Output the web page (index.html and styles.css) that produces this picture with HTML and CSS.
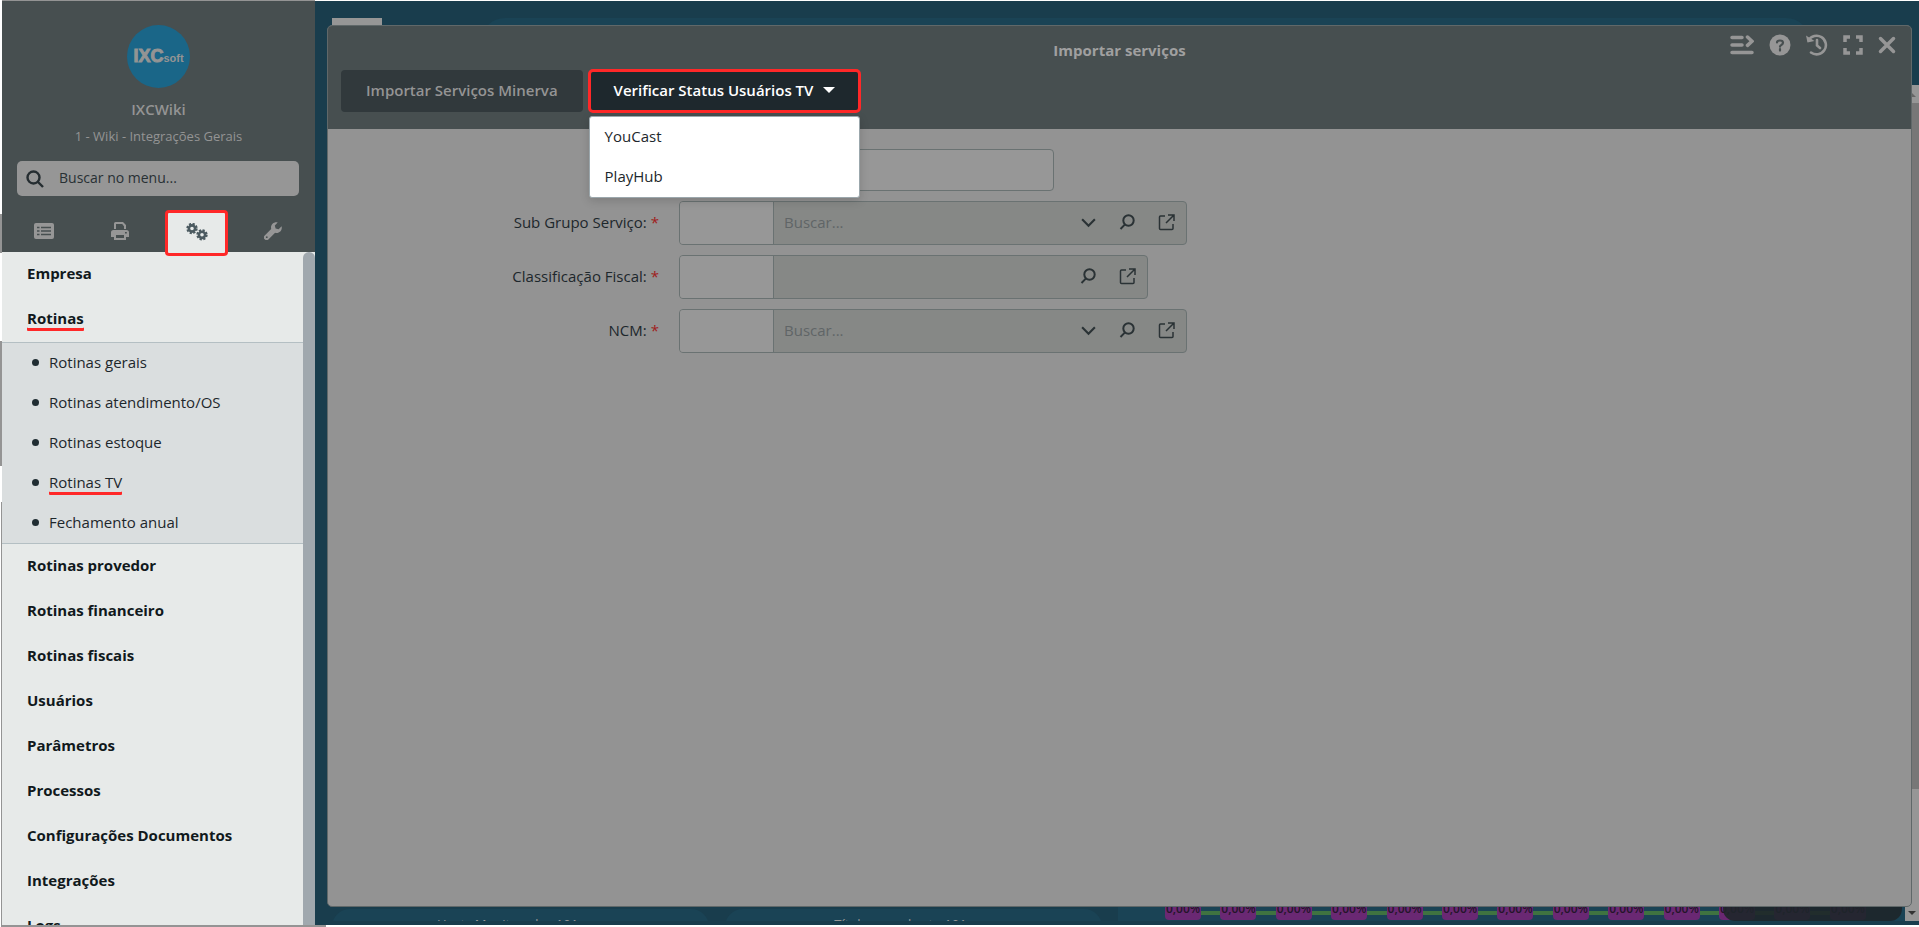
FILE: index.html
```html
<!DOCTYPE html>
<html lang="pt-BR">
<head>
<meta charset="utf-8">
<title>Importar serviços</title>
<link rel="stylesheet" href="styles.css">
</head>
<body>
<svg class="defs" aria-hidden="true">
  <symbol id="lens" viewBox="0 0 17 17"><circle cx="9.500" cy="6.500" r="5.200"/><path d="M6 10.400 1.500 15"/></symbol>
  <symbol id="chevron" viewBox="0 0 16 16"><path d="M2 5l6 6 6-6"/></symbol>
  <symbol id="external" viewBox="0 0 17 17"><path d="M7 2H2.500Q1.500 2 1.500 3v11.500q0 1 1 1H14q1 0 1-1V10M10 1h6v6M15.500 1.500 8 9"/></symbol>
</svg>
<div class="app">
  <aside class="sidebar">
    <header class="brand">
      <div class="logo"><span class="logo-main">IXC</span><span class="logo-sub">soft</span></div>
      <p class="brand-name">IXCWiki</p>
      <p class="brand-unit">1 - Wiki - Integrações Gerais</p>
    </header>
    <label class="search">
      <svg class="search-icon" viewBox="0 0 18 18"><circle cx="7.500" cy="7.500" r="6"/><path d="M12 12l5 5"/></svg>
      <input type="text" placeholder="Buscar no menu..." aria-label="Buscar no menu">
    </label>
    <nav class="tabs">
      <button class="tab" aria-label="Cadastros"><svg width="20" height="16" viewBox="0 0 20 16"><rect width="20" height="16" rx="2"/><path class="cut" d="M3 4.500h2.500M3 8h2.500M3 11.500h2.500M7 4.500h10M7 8h10M7 11.500h10"/></svg></button>
      <button class="tab" aria-label="Relatórios"><svg width="18" height="18" viewBox="0 0 18 18"><path d="M3 7V1.500Q3 0 4.500 0H12l3 3v4h-2V4.200L11.200 2H5v5zM2.500 8h13Q18 8 18 10.500V15h-3v3H3v-3H0v-4.500Q0 8 2.500 8zM5 13v3h8v-3zM14 10v1.500h1.800V10z" fill-rule="evenodd"/></svg></button>
      <button class="tab tab-active" aria-label="Sistema"><svg width="22" height="18" viewBox="0 0 22 18"><g class="gear"><circle cx="6" cy="5.500" r="3.100"/><circle class="teeth" cx="6" cy="5.500" r="4.700"/><circle cx="16" cy="11.800" r="3.100"/><circle class="teeth" cx="16" cy="11.800" r="4.700"/></g></svg></button>
      <button class="tab" aria-label="Ferramentas"><svg width="18" height="18" viewBox="0 0 18 18"><path d="M17.600 4.300 14.600 7.200 11.600 6.400 10.800 3.400 13.700.4C10.300-.5 7 2 7 5.400q0 .8.200 1.500L.7 13.400a2.700 2.700 0 0 0 3.900 3.900L11.100 10.800q.8.200 1.500.2c3.400 0 5.900-3.300 5-6.700z"/><circle class="hole" cx="2.800" cy="15.200" r=".9"/></svg></button>
    </nav>
    <div class="menu">
      <ul class="menu-list">
        <li><a class="item" href="#">Empresa</a></li>
        <li><a class="item" href="#"><span class="marked">Rotinas</span></a>
          <ul class="submenu">
            <li><a href="#">Rotinas gerais</a></li>
            <li><a href="#">Rotinas atendimento/OS</a></li>
            <li><a href="#">Rotinas estoque</a></li>
            <li><a href="#"><span class="marked">Rotinas TV</span></a></li>
            <li><a href="#">Fechamento anual</a></li>
          </ul>
        </li>
        <li><a class="item" href="#">Rotinas provedor</a></li>
        <li><a class="item" href="#">Rotinas financeiro</a></li>
        <li><a class="item" href="#">Rotinas fiscais</a></li>
        <li><a class="item" href="#">Usuários</a></li>
        <li><a class="item" href="#">Parâmetros</a></li>
        <li><a class="item" href="#">Processos</a></li>
        <li><a class="item" href="#">Configurações Documentos</a></li>
        <li><a class="item" href="#">Integrações</a></li>
        <li><a class="item" href="#">Logs</a></li>
      </ul>
      <div class="menu-scroll"></div>
    </div>
  </aside>

  <main class="stage">
    <div class="board">
      <div class="board-top"><div class="chip"></div><div class="card-top"></div></div>
      <div class="board-bottom">
        <div class="card"><span>Hosts Monitorados 101</span></div>
        <div class="card"><span>Títulos em aberto 101</span></div>
        <div class="chart">
          <div class="points">
            <span>0,00%</span><span>0,00%</span><span>0,00%</span><span>0,00%</span><span>0,00%</span><span>0,00%</span><span>0,00%</span><span>0,00%</span><span>0,00%</span><span>0,00%</span><span>0,00%</span><span>0,00%</span><span>0,00%</span>
          </div>
          <div class="toast"></div>
        </div>
      </div>
    </div>
    <div class="page-scroll"><i class="arrow-up"></i><div class="thumb"></div><i class="arrow-down"></i></div>

    <section class="modal" aria-label="Importar serviços">
      <header class="modal-head">
        <div class="title-row">
          <h1>Importar serviços</h1>
          <div class="tools">
            <button aria-label="Menu"><svg width="24" height="20" viewBox="0 0 24 20"><path d="M2 2.500h10M2 10h10M2 17.500h20M17.500 2l4.500 4.200-4.500 4.200"/></svg></button>
            <button aria-label="Ajuda"><svg width="22" height="22" viewBox="0 0 22 22"><circle class="solid" cx="11" cy="11" r="10.500"/><path class="mark" d="M8 8.500Q8 6.500 11 6.500t3 2.300q0 1.400-1.600 2.100-1.400.6-1.400 1.800M11 15v1.600"/></svg></button>
            <button aria-label="Histórico"><svg width="22" height="22" viewBox="0 0 22 22"><path class="clock" d="M2.500 6.500A9.300 9.300 0 1 1 5 18.500M11 6v5.500l3 2.500"/><path class="solid" d="M0 1.500 1.500 8.500 8.500 7z"/></svg></button>
            <button aria-label="Tela cheia"><svg width="20" height="20" viewBox="0 0 20 20"><path class="square" d="M2 7V2h5M13 2h5v5M18 13v5h-5M7 18H2v-5"/></svg></button>
            <button aria-label="Fechar"><svg width="18" height="18" viewBox="0 0 18 18"><path d="M2.500 2.500l13 13M15.500 2.500l-13 13"/></svg></button>
          </div>
        </div>
        <div class="actions">
          <button class="btn">Importar Serviços Minerva</button>
          <div class="dropdown">
            <button class="btn btn-open">Verificar Status Usuários TV<i class="caret"></i></button>
            <ul class="options">
              <li><a href="#">YouCast</a></li>
              <li><a href="#">PlayHub</a></li>
            </ul>
          </div>
        </div>
      </header>
      <form class="form">
        <div class="row"><label for="f0"></label><input class="plain" id="f0" type="text" aria-label="Descrição"></div>
        <div class="row"><label for="f1">Sub Grupo Serviço: <b>*</b></label>
          <div class="combo"><input class="code" id="f1" type="text"><input class="find" type="text" placeholder="Buscar..." aria-label="Buscar sub grupo">
            <button type="button" aria-label="Abrir lista"><svg><use href="#chevron"/></svg></button><button type="button" aria-label="Pesquisar"><svg><use href="#lens"/></svg></button><button type="button" aria-label="Abrir cadastro"><svg class="thin"><use href="#external"/></svg></button></div></div>
        <div class="row"><label for="f2">Classificação Fiscal: <b>*</b></label>
          <div class="combo combo-short"><input class="code" id="f2" type="text"><input class="find" type="text" aria-label="Classificação fiscal">
            <button type="button" aria-label="Pesquisar"><svg><use href="#lens"/></svg></button><button type="button" aria-label="Abrir cadastro"><svg class="thin"><use href="#external"/></svg></button></div></div>
        <div class="row"><label for="f3">NCM: <b>*</b></label>
          <div class="combo"><input class="code" id="f3" type="text"><input class="find" type="text" placeholder="Buscar..." aria-label="Buscar NCM">
            <button type="button" aria-label="Abrir lista"><svg><use href="#chevron"/></svg></button><button type="button" aria-label="Pesquisar"><svg><use href="#lens"/></svg></button><button type="button" aria-label="Abrir cadastro"><svg class="thin"><use href="#external"/></svg></button></div></div>
      </form>
    </section>
  </main>
</div>
</body>
</html>
```

FILE: styles.css
```css
* { box-sizing: border-box; }
body { margin: 0; background: #fff; color: #1d272c; font: 15px/20px "Open Sans", "Noto Sans", sans-serif; }
ul { list-style: none; margin: 0; padding: 0; }
a { color: inherit; text-decoration: none; }
button, input { font: inherit; color: inherit; margin: 0; padding: 0; border: 0; background: none; outline: 0; }
.defs { display: none; }

.app {
  display: flex; height: 100vh; overflow: hidden; padding: 1px 0 2px 2px;
  background:
    linear-gradient(#949494, #949494) 2px 0 / 313px 1px no-repeat,
    linear-gradient(#949494, #949494) 0 214px / 2px 39px no-repeat,
    linear-gradient(#949494, #949494) 0 341px / 2px 125px no-repeat,
    linear-gradient(#949494, #949494) 1px 502px / 1px 100% no-repeat,
    linear-gradient(#949494, #949494) 1px 100% / 325px 2px no-repeat,
    #fff;
}

.sidebar { display: flex; flex-direction: column; flex: 0 0 313px; background: #474f50; }
.brand { display: flex; flex-direction: column; align-items: center; padding-top: 24px; color: #949494; }
.logo { display: flex; align-items: baseline; justify-content: center; width: 63px; height: 63px; border-radius: 50%; background: #1a6688; color: #949494; font-family: "Liberation Sans", Arial, sans-serif; font-weight: bold; line-height: 63px; -webkit-text-stroke: 1px #949494; }
.logo-main { font-size: 18px; }
.logo-sub { font-size: 11px; -webkit-text-stroke-width: 0; }
.brand p { margin: 0; }
.brand-name { padding-top: 11px; font-weight: 600; }
.brand-unit { padding-top: 7px; font-size: 13px; }
.search { display: flex; align-items: center; height: 35px; margin: 15px 16px 0 15px; padding: 0 9px; border-radius: 5px; background: #969696; color: #283034; }
.search input { flex: 1; min-width: 0; padding-bottom: 2px; font-size: 14px; }
.search input::placeholder { color: #283034; opacity: 1; }
.search-icon { width: 18px; height: 18px; margin-right: 15px; fill: none; stroke: #252d31; stroke-width: 2.400; }
.tabs { display: flex; justify-content: space-between; margin-top: 14px; padding: 0 10px; height: 42px; }
.tab { display: grid; place-items: center; width: 63px; }
.tab svg { fill: #969696; }
.tab .cut { stroke: #474f50; stroke-width: 1.500; }
.tab .hole { fill: #474f50; }
.tab-active { z-index: 1; height: 46px; padding-bottom: 2px; border: 3px solid #ff2828; border-radius: 4px; background: #e7eae9; }
.gear circle { fill: none; stroke: #4b5a60; stroke-width: 2.600; }
.gear .teeth { stroke-width: 2; stroke-dasharray: 2.200 1.490; }

.menu { display: flex; flex: 1; min-height: 0; background: #e7eae9; }
.menu-list { flex: 1; overflow: hidden; }
.menu-scroll { width: 12px; border-radius: 6px 6px 0 0; background: #a0a8ae; }
.item { display: flex; align-items: center; height: 45px; padding: 0 0 3px 25px; color: #11191c; font-weight: 700; }
.submenu { border: solid #b4bfc3; border-width: 1px 0; background: #dadedf; }
.submenu a { display: flex; align-items: center; gap: 10px; height: 40px; padding: 0 0 2px 30px; }
.submenu a::before { content: ""; width: 7px; height: 7px; border-radius: 50%; background: #202d33; }
.marked { border-radius: 1px; box-shadow: 0 3px 0 #ff2828; }

.stage { position: relative; display: flex; flex: 1; min-width: 0; background: #193d4d; }
.board { display: flex; flex: 1; flex-direction: column; justify-content: space-between; min-width: 0; padding: 17px 0 4px; }
.board-top { display: flex; gap: 99px; padding: 0 95px 0 17px; }
.chip { width: 50px; height: 20px; background: #969696; }
.card-top { flex: 1; height: 24px; border-radius: 24px 24px 0 0; background: #1a4355; }
.board-bottom { display: flex; gap: 16px; height: 31px; padding-left: 17px; overflow: hidden; }
.card { display: flex; justify-content: center; flex: 0 0 377px; height: 40px; padding: 8px 26px 0 0; margin-top: 19px; border-radius: 18px 18px 0 0; background: #1a4355; color: #969696; font-size: 13px; line-height: 14px; }
.chart { position: relative; flex: 1; padding: 8px 39px 0 47px; background: #1a4355; }
.points { display: flex; justify-content: space-between; height: 22px; background: linear-gradient(#3f7340, #3f7340) 0 13px / 100% 4px no-repeat; }
.points span { width: 36px; border-radius: 4px; background: #6a2873; color: #24152a; font-size: 12px; font-weight: 600; text-align: center; line-height: 22px; }
.toast { position: absolute; right: 3px; bottom: 0; width: 179px; height: 31px; border-radius: 12px; background: rgba(30, 38, 42, .9); }

.page-scroll { display: flex; flex-direction: column; justify-content: space-between; align-items: center; width: 14px; margin: 84px 0 4px; padding: 8px 0 6px; background: #969696; }
.thumb { width: 14px; height: 686px; margin: 6px 0 auto; background: #777; }
.arrow-up { border: 4px solid transparent; border-top: 0; border-bottom-color: #666; }
.arrow-down { border: 4px solid transparent; border-bottom: 0; border-top-color: #333; }

.modal { position: absolute; inset: 24px 7px 18px 12px; z-index: 1; display: flex; flex-direction: column; border: 1px solid #606869; border-radius: 5px; background: #939393; }
.modal-head { padding-bottom: 17px; border-radius: 4px 4px 0 0; background: #474f50; }
.title-row { position: relative; display: flex; justify-content: center; height: 44px; padding-top: 14px; color: #a0a0a0; }
.title-row h1 { margin: 0; font-size: 15px; font-weight: 700; }
.tools { position: absolute; top: 8px; right: 15px; display: flex; align-items: center; gap: 15px; height: 22px; }
.tools button { display: block; }
.tools svg { display: block; fill: none; stroke: #969696; stroke-width: 3.500; stroke-linecap: round; }
.tools .solid { fill: #969696; stroke: none; }
.tools .clock { stroke-width: 2.600; }
.tools .mark { stroke: #474f50; stroke-width: 2.200; }
.tools .square { stroke-linecap: butt; }
.actions { display: flex; gap: 6px; padding-left: 13px; }
.btn { height: 42px; padding: 0 25px 2px; border-radius: 4px; background: #31393c; color: #949494; font-weight: 600; }
.dropdown { position: relative; }
.btn-open { display: flex; align-items: center; gap: 10px; background: #1e282d; color: #fff; outline: 3px solid #ff2828; outline-offset: -2px; }
.caret { border: 6px solid transparent; border-top-color: #fff; border-bottom: 0; }
.options { position: absolute; z-index: 2; top: 46px; left: 0; right: 0; border: 1px solid #9ba7ac; border-radius: 3px; background: #fff; box-shadow: 0 3px 10px rgba(0,0,0,.15); }
.options a { display: flex; align-items: center; height: 40px; padding: 0 0 2px 15px; }

.form { display: flex; flex-direction: column; gap: 10px; padding: 20px 0 0; }
.row { display: flex; gap: 20px; }
.row label { display: flex; align-items: center; justify-content: flex-end; gap: 4px; flex: 0 0 331px; padding-bottom: 2px; }
.row b { color: #a02020; font-weight: 400; }
.plain { width: 375px; height: 42px; border: 1px solid #6a7272; border-radius: 4px; background: #979797; }
.combo { display: flex; width: 508px; height: 44px; border: 1px solid #6a7272; border-radius: 4px; background: #868886; overflow: hidden; }
.combo-short { width: 469px; }
.code { width: 94px; border-right: 1px solid #6a7272; background: #979797; }
.find { flex: 1; min-width: 0; padding: 0 0 2px 10px; }
.find::placeholder { color: #606566; opacity: 1; }
.combo button { display: grid; place-items: center; width: 39px; padding-bottom: 1px; }
.combo svg { width: 17px; height: 17px; fill: none; stroke: #2a3235; stroke-width: 2; }
.combo .thin { stroke-width: 1.500; }
```
